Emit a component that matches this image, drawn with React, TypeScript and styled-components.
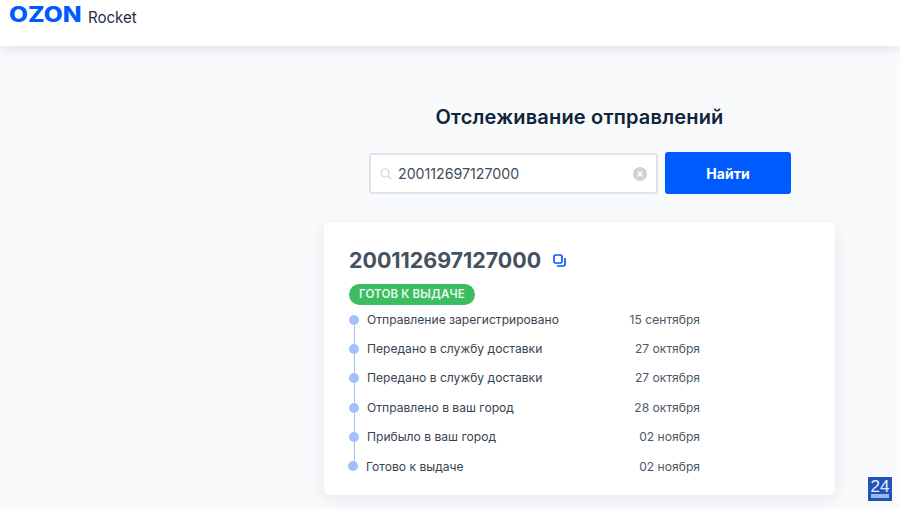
import React from "react";
import styled, { createGlobalStyle } from "styled-components";

const GlobalStyle = createGlobalStyle`
  html, body {
    margin: 0;
    padding: 0;
    height: 100%;
    overflow: hidden;
    background: #f9fafc;
    font-family: Inter, "Noto Sans", sans-serif;
  }
`;

const Page = styled.div`
  height: 509px;
  position: relative;
  overflow: hidden;
`;

const Header = styled.header`
  height: 46px;
  background: #fff;
  box-shadow: 0 2px 12px rgba(30, 45, 70, 0.12);
  display: flex;
  align-items: flex-start;
  padding: 4px 0 0 9px;
  box-sizing: border-box;
`;

const LogoOzon = styled.span`
  font-size: 21px;
  line-height: 22px;
  font-weight: 800;
  color: #005bff;
  display: inline-block;
  transform: scaleX(1.17);
  transform-origin: left center;
  width: 79px;
`;

const LogoRocket = styled.span`
  font-size: 16px;
  line-height: 26px;
  font-weight: 400;
  color: #1f2e40;
  display: inline-block;
  transform: scaleX(0.94);
  transform-origin: left center;
`;

const Main = styled.main`
  width: 511px;
  margin-left: 324px;
  display: flex;
  flex-direction: column;
  align-items: center;
`;

const Title = styled.h1`
  margin: 58px 0 0;
  font-size: 20px;
  line-height: 26px;
  font-weight: 600;
  color: #10243a;
  letter-spacing: 0.18px;
`;

const SearchRow = styled.form`
  display: flex;
  gap: 7px;
  margin: 23px 0 28px 1px;
`;

const SearchField = styled.div`
  width: 289px;
  height: 41px;
  box-sizing: border-box;
  background: #fff;
  border: 2px solid #dfe4ec;
  border-radius: 3px;
  display: flex;
  align-items: center;
  padding: 0 9px;
  color: #cfd4da;
`;

const SearchInput = styled.input`
  flex: 1;
  min-width: 0;
  border: 0;
  outline: 0;
  padding: 0;
  margin-left: 6px;
  background: transparent;
  font: 400 14.2px Inter, sans-serif;
  color: #3f4c5a;
`;

const SubmitButton = styled.button`
  width: 126px;
  height: 42px;
  margin-top: -1px;
  border: 0;
  border-radius: 3px;
  background: #005bff;
  color: #fff;
  font: 700 14px Inter, sans-serif;
`;

const Card = styled.section`
  width: 100%;
  height: 273px;
  box-sizing: border-box;
  background: #fff;
  border-radius: 6px;
  box-shadow: 0 4px 16px rgba(30, 45, 70, 0.09);
  padding: 23px 0 0 25px;
`;

const TrackingRow = styled.div`
  display: flex;
  align-items: center;
  gap: 12px;
`;

const TrackingNumber = styled.h2`
  margin: 0;
  font-size: 21.4px;
  line-height: 30px;
  font-weight: 700;
  color: #44525f;
`;

const StatusBadge = styled.div`
  display: inline-block;
  margin-top: 9px;
  height: 21px;
  line-height: 21px;
  padding: 0 10px;
  border-radius: 11px;
  background: #3cbd62;
  color: #e9f8ed;
  font-size: 11.6px;
  font-weight: 600;
  letter-spacing: 0.1px;
`;

const Timeline = styled.ol`
  list-style: none;
  margin: -0.5px 0 0;
  padding: 0;
  width: 351px;
`;

const Step = styled.li<{ $last?: boolean }>`
  position: relative;
  height: 29.4px;
  display: flex;
  align-items: center;
  justify-content: space-between;
  padding-left: ${({ $last }) => ($last ? "17px" : "18px")};
  font-size: 12.1px;
  color: #38444f;

  &::before {
    content: "";
    position: absolute;
    left: ${({ $last }) => ($last ? "-0.6px" : "0.4px")};
    top: 10px;
    width: 10px;
    height: 10px;
    border-radius: 50%;
    background: #a3c0fd;
  }

  &::after {
    content: "";
    display: ${({ $last }) => ($last ? "none" : "block")};
    position: absolute;
    left: 5px;
    top: 15px;
    width: 1px;
    height: 29.4px;
    background: #a3c0fd;
  }
`;

const StepDate = styled.span`
  color: #4d5966;
`;

const Counter = styled.div`
  position: absolute;
  right: 8px;
  bottom: 8px;
  width: 24px;
  height: 24px;
  background: #1f55b8;
  color: #e8effb;
  font-family: "Liberation Sans", sans-serif;
  font-size: 17px;
  line-height: 17px;
  text-align: center;
  box-sizing: border-box;
  padding-top: 1px;

  &::after {
    content: "";
    position: absolute;
    left: 3px;
    right: 3px;
    bottom: 3px;
    height: 4px;
    background: #9db8e6;
  }
`;

const steps = [
  { label: "Отправление зарегистрировано", date: "15 сентября" },
  { label: "Передано в службу доставки", date: "27 октября" },
  { label: "Передано в службу доставки", date: "27 октября" },
  { label: "Отправлено в ваш город", date: "28 октября" },
  { label: "Прибыло в ваш город", date: "02 ноября" },
  { label: "Готово к выдаче", date: "02 ноября" },
];

const SearchIcon = () => (
  <svg width="12" height="12" viewBox="0 0 12 12" fill="none" stroke="currentColor" strokeWidth="1.2" style={{ flex: "none" }}>
    <circle cx="5" cy="5" r="4" />
    <path d="M8 8l3.4 3.4" />
  </svg>
);

const ClearIcon = () => (
  <svg width="14" height="14" viewBox="0 0 14 14" style={{ flex: "none" }}>
    <circle cx="7" cy="7" r="7" fill="#cdd2d8" />
    <path d="M4.5 4.5l5 5M9.5 4.5l-5 5" stroke="#fff" strokeWidth="1.6" />
  </svg>
);

const CopyIcon = () => (
  <svg width="13" height="13" viewBox="0 0 13 13" fill="none" stroke="#005bff" strokeWidth="1.7">
    <rect x="1" y="1" width="8" height="8" rx="1.5" />
    <path d="M4 12h6.5a1.5 1.5 0 0 0 1.5-1.5V4" />
  </svg>
);

export default function App() {
  return (
    <Page>
      <GlobalStyle />
      <Header>
        <LogoOzon>OZON</LogoOzon>
        <LogoRocket>Rocket</LogoRocket>
      </Header>
      <Main>
        <Title>Отслеживание отправлений</Title>
        <SearchRow onSubmit={(e) => e.preventDefault()}>
          <SearchField>
            <SearchIcon />
            <SearchInput defaultValue="200112697127000" />
            <ClearIcon />
          </SearchField>
          <SubmitButton>Найти</SubmitButton>
        </SearchRow>
        <Card>
          <TrackingRow>
            <TrackingNumber>200112697127000</TrackingNumber>
            <CopyIcon />
          </TrackingRow>
          <StatusBadge>ГОТОВ К ВЫДАЧЕ</StatusBadge>
          <Timeline>
            {steps.map((step, i) => (
              <Step key={i} $last={i === steps.length - 1}>
                <span>{step.label}</span>
                <StepDate>{step.date}</StepDate>
              </Step>
            ))}
          </Timeline>
        </Card>
      </Main>
      <Counter>24</Counter>
    </Page>
  );
}
